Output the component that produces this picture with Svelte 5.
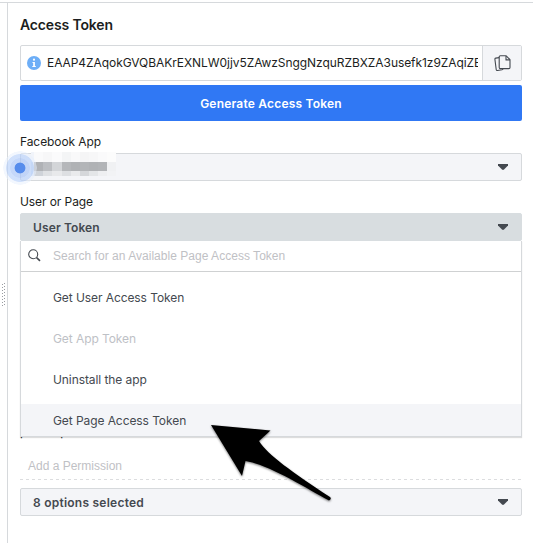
<script>
  const options = [
    { label: 'Get User Access Token' },
    { label: 'Get App Token', disabled: true },
    { label: 'Uninstall the app' },
    { label: 'Get Page Access Token', active: true }
  ];
  const mosaic = [
    ['#f1f4fa', '#fafafb', '#f7f7f8', '#fbfbfc', '#f4f5f6', '#f9f9fa', '#f5f5f6', '#f7f7f8', '#fafafb', '#fcfcfc'],
    ['#dfe5f0', '#b0b2b6', '#bcbec2', '#d3d5d8', '#b5b7ba', '#b0b2b5', '#b3b5b8', '#b0b2b5', '#b2b4b7', '#f0f1f3'],
    ['#d9e3f5', '#cfd3d9', '#dfe1e4', '#e8e9eb', '#dddfe2', '#e9eaec', '#d5d7da', '#e4e6e8', '#eeeff1', '#f2f3f5']
  ];
</script>

{#snippet caret()}
  <svg class="caret" width="10" height="6" viewBox="0 0 10 6"><path d="M0 0H10V1.4L6 5.5Q5 6.4 4 5.5L0 1.4Z" fill="#444950" /></svg>
{/snippet}

<div class="page">
  <div class="gutter">
    <svg width="5" height="24" viewBox="0 0 5 24">
      {#each Array(8) as _, i}
        <rect x="1" y={i * 3 + 1} width="1" height="1" fill="#999ca1" />
        <rect x="3" y={i * 3} width="1" height="1" fill="#999ca1" />
      {/each}
    </svg>
  </div>
  <main>
    <h1><span>Access Token</span></h1>
    <div class="token">
      <svg class="info" width="14" height="14" viewBox="0 0 14 14">
        <circle cx="7" cy="7" r="7" fill="#6daef7" />
        <circle cx="7" cy="3.7" r="1.1" fill="#fff" />
        <path d="M5.5 6H7.9V10H8.8V11H5.3V10H6.2V7H5.5Z" fill="#fff" />
      </svg>
      <div class="value">EAAP4ZAqokGVQBAKrEXNLW0jjv5ZAwzSnggNzquRZBXZA3usefk1z9ZAqiZB</div>
      <div class="copy">
        <svg width="17" height="17" viewBox="0 0 17 17" fill="none" stroke="#444950" stroke-width="1.1" stroke-linejoin="round">
          <path d="M5.2 2.6L1.7 3.1Q.8 3.3.9 4.2L2.2 14.5Q2.4 15.7 3.5 15.5L8 14.8Q8.9 14.6 9 13.7" />
          <path d="M6.4.8H12.2L16 4.7V12.4Q16 13.6 14.8 13.6H6.4Q5.2 13.6 5.2 12.4V2Q5.2.8 6.4.8Z" />
          <path d="M12 .9V4.9H16" />
        </svg>
      </div>
    </div>
    <div class="generate"><span>Generate Access Token</span></div>

    <div class="label app-label">Facebook App</div>
    <div class="select">
      <div class="mosaic">
        {#each mosaic as row}
          {#each row as c}<i style:background={c}></i>{/each}
        {/each}
      </div>
      <div class="pulse"></div>
      {@render caret()}
    </div>

    <div class="label page-label">User or Page</div>
    <div class="select open">
      <b class="user-token">User Token</b>
      {@render caret()}
      <div class="menu">
        <div class="search">
          <svg width="14" height="14" viewBox="0 0 14 14" fill="none" stroke="#444950"><circle cx="5.2" cy="5.2" r="4.5" stroke-width="1.1" /><path d="M8.6 8.7L12 11.9" stroke-width="1.6" /></svg>
          <span>Search for an Available Page Access Token</span>
        </div>
        <div class="list">
          {#each options as o}
            <div class="option" class:disabled={o.disabled} class:active={o.active}>{o.label}</div>
          {/each}
        </div>
      </div>
    </div>

    <div class="permission"><span>public_profile</span><em></em></div>
    <div class="add">Add a Permission</div>
    <svg class="dash" width="502" height="1"><path d="M0 .5H502" stroke="#dcdddf" stroke-dasharray="3 3" /></svg>
    <div class="select">
      <b class="count">8 options selected</b>
      {@render caret()}
    </div>
  </main>
  <svg class="arrow" width="140" height="100" viewBox="200 410 140 100">
    <path d="M211 425L270.5 430.5L259 441C268 455 292 472 330 497Q332 499 329 500.5C306 488 270 465 245.5 461L242 476Z" />
  </svg>
</div>

<style>
  :global(body) { margin: 0; }
  * { box-sizing: border-box; }
  .page { position: relative; display: flex; width: 533px; height: 543px; overflow: hidden; background: #fff; border-top: 1px solid #fff; font-family: Inter, sans-serif; font-size: 12px; color: #1c1e21; white-space: nowrap; }
  .page::before { content: ''; position: absolute; left: 0; right: 0; top: 1px; height: 1px; background: #d6d9dc; }
  .gutter { width: 8px; margin-top: 2px; padding: 280px 0 0 1px; border-right: 1px solid #d6d9dc; }
  .gutter svg { display: block; }
  main { width: 502px; margin-left: 12px; }
  h1 { margin: 14px 0 0; height: 30px; font-size: 14px; line-height: 20px; font-weight: 600; letter-spacing: -0.15px; }
  .token { display: flex; align-items: center; height: 36px; border: 1px solid #d6d9dc; border-radius: 2px; }
  .info { margin-left: 6px; flex: none; }
  .value { width: 431px; margin-left: 6px; overflow: hidden; line-height: 18px; letter-spacing: -0.065px; }
  .copy { display: flex; align-items: center; justify-content: center; width: 39px; height: 34px; margin-left: auto; background: #f4f5f8; border-left: 1px solid #d6d9dc; }
  .generate { height: 36px; margin-top: 4px; border-radius: 2px; background: #3078f4; color: #fff; font-weight: 600; line-height: 37px; text-align: center; letter-spacing: 0.2px; }
  .label { height: 18px; line-height: 18px; letter-spacing: -0.08px; }
  .app-label { margin: 12px 0 2px; }
  .page-label { margin: 12px 0 2px; }
  .select { position: relative; display: flex; align-items: center; height: 28px; padding: 0 13px 0 12px; border: 1px solid #d6d9dc; border-radius: 2px; background: #f4f5f8; }
  .select b { color: #444950; font-weight: 600; }
  .user-token { letter-spacing: 0.12px; }
  .count { letter-spacing: 0.24px; }
  .caret { margin-left: auto; }
  .open { background: #d8dde0; border-color: #d8dde0; }
  .mosaic { position: absolute; left: 10px; top: -2px; display: grid; grid-template-columns: 3px 9px 9px 10px 9px 9px 9px 9px 9px 9px; grid-template-rows: 10px 9px 5px; }
  .pulse { position: absolute; left: -18px; top: -3px; width: 34px; height: 34px; border-radius: 50%; background: radial-gradient(circle, #568cec 0 5px, #a8c4f7aa 5.8px 9.5px, #b5cffaa0 10px 13.5px, #e6effd80 14.3px 16.5px, transparent 17px); }
  .menu { position: absolute; z-index: 1; left: -1px; top: 27px; width: 502px; height: 196px; background: #fff; border: 1px solid #d6d9dc; border-top: 0; box-shadow: 0 1px 1px #0002; }
  .search { display: flex; align-items: center; height: 31px; padding-left: 7px; border-bottom: 1px solid #cfd1d2; font-family: 'Liberation Sans', sans-serif; color: #bfc1c5; }
  .search span { margin-left: 11px; letter-spacing: 0.03px; }
  .list { height: 164px; padding-top: 9px; overflow: hidden; }
  .option { height: 34px; margin-bottom: 7px; padding-left: 32px; line-height: 34px; color: #444950; letter-spacing: -0.08px; }
  .disabled { color: #bec1c6; }
  .active { background: #f4f5f8; }
  .permission { display: flex; justify-content: space-between; height: 18px; margin-top: 182px; line-height: 18px; }
  .permission em { width: 14px; height: 14px; border: 1px solid #c6c8cb; border-radius: 2px; }
  .add { height: 20px; margin: 15px 0 0 8px; font-family: 'Liberation Sans', sans-serif; line-height: 20px; color: #bfc1c5; }
  .dash { display: block; margin: 3px 0 8px; }
  .arrow { position: absolute; z-index: 2; left: 200px; top: 409px; filter: drop-shadow(0 1px 1px #0008); }
</style>
